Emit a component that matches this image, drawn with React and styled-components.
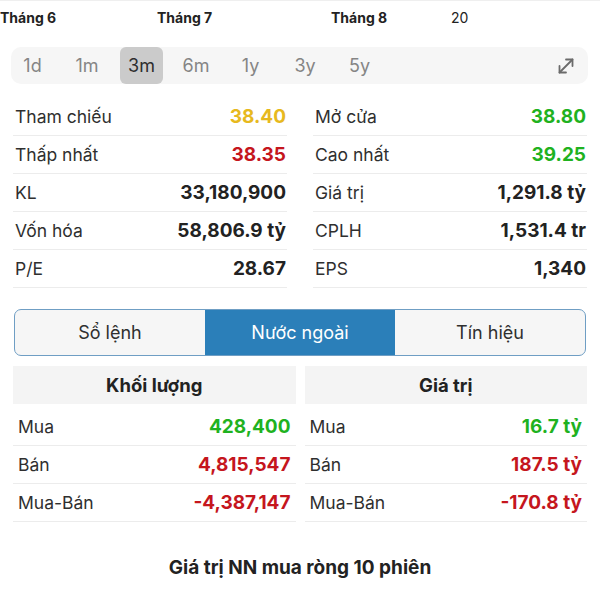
import React from "react";
import styled, { createGlobalStyle } from "styled-components";

const Global = createGlobalStyle`
  html, body { margin: 0; padding: 0; background: #fff; }
  body { font-family: Inter, "Noto Sans", sans-serif; color: #2a2a2a; }
  * { box-sizing: border-box; }
`;

const Page = styled.div`
  width: 600px;
  height: 600px;
  overflow: hidden;
  display: flex;
  flex-direction: column;
  border-top: 1px solid #efefef;
`;

const MonthAxis = styled.div`
  display: flex;
  align-items: center;
  height: 33px;
`;

const MonthLabel = styled.div`
  width: ${(p) => p.$w}px;
  flex: none;
  font-size: 14px;
  font-weight: ${(p) => (p.$light ? 400 : 700)};
  color: #222;
  white-space: nowrap;
`;

const PeriodBar = styled.div`
  margin: 13px 12px 0 11px;
  height: 37px;
  background: #f6f6f6;
  border-radius: 10px;
  display: flex;
  align-items: center;
  gap: 11.5px;
  padding-right: 10px;
`;

const Period = styled.div`
  width: 43px;
  height: 37px;
  flex: none;
  display: flex;
  align-items: center;
  justify-content: center;
  border-radius: 6px;
  font-size: 18px;
  font-weight: 400;
  color: ${(p) => (p.$active ? "#2e2e2e" : "#858585")};
  background: ${(p) => (p.$active ? "#cbcbcb" : "transparent")};
`;

const ExpandBtn = styled.div`
  margin-left: auto;
  width: 24px;
  height: 24px;
  display: flex;
  align-items: center;
  justify-content: center;
  color: #6b6b6b;
`;

const StatsGrid = styled.div`
  margin-top: 14px;
  padding: 0 13px;
  display: grid;
  grid-template-columns: 1fr 1fr;
  column-gap: 26px;
`;

const StatRow = styled.div`
  height: 38px;
  display: flex;
  align-items: center;
  justify-content: space-between;
  border-bottom: 1px solid #ececec;
  padding: 0 1px 0 2px;
`;

const Label = styled.span`
  font-size: 17.5px;
  font-weight: 400;
  color: #2f2f2f;
`;

const Value = styled.span`
  font-size: 19px;
  font-weight: 700;
  color: ${(p) => p.$color || "#222"};
`;

const Segmented = styled.div`
  margin: 21px 14px 0 14px;
  height: 47px;
  display: grid;
  grid-template-columns: 1fr 1fr 1fr;
  border: 1.5px solid #6f9ec4;
  border-radius: 7px;
  overflow: hidden;
  background: #f6f6f6;
`;

const Segment = styled.div`
  display: flex;
  align-items: center;
  justify-content: center;
  font-size: 18px;
  color: ${(p) => (p.$active ? "#fff" : "#2f2f2f")};
  background: ${(p) => (p.$active ? "#2b7fb9" : "transparent")};
`;

const ForeignGrid = styled.div`
  margin-top: 10px;
  padding: 0 13px;
  display: grid;
  grid-template-columns: 1fr 1fr;
  column-gap: 9px;
`;

const Column = styled.div`
  display: flex;
  flex-direction: column;
`;

const HeadCell = styled.div`
  height: 38px;
  margin-bottom: 4px;
  background: #f4f4f4;
  display: flex;
  align-items: center;
  justify-content: center;
  font-size: 18.5px;
  font-weight: 700;
  color: #222;
`;

const ForeignRow = styled(StatRow)`
  padding: 0 5px 0 5px;
`;

const Footer = styled.div`
  margin-top: 34px;
  text-align: center;
  font-size: 19px;
  font-weight: 700;
  color: #222;
`;

const GREEN = "#1fb21f";
const RED = "#c5161d";
const YELLOW = "#e7b91e";

const leftStats = [
  ["Tham chiếu", "38.40", YELLOW],
  ["Thấp nhất", "38.35", RED],
  ["KL", "33,180,900"],
  ["Vốn hóa", "58,806.9 tỷ"],
  ["P/E", "28.67"],
];
const rightStats = [
  ["Mở cửa", "38.80", GREEN],
  ["Cao nhất", "39.25", GREEN],
  ["Giá trị", "1,291.8 tỷ"],
  ["CPLH", "1,531.4 tr"],
  ["EPS", "1,340"],
];

const volume = [
  ["Mua", "428,400", GREEN],
  ["Bán", "4,815,547", RED],
  ["Mua-Bán", "-4,387,147", RED],
];
const value = [
  ["Mua", "16.7 tỷ", GREEN],
  ["Bán", "187.5 tỷ", RED],
  ["Mua-Bán", "-170.8 tỷ", RED],
];

const periods = ["1d", "1m", "3m", "6m", "1y", "3y", "5y"];

function ExpandIcon() {
  return (
    <svg width="20" height="20" viewBox="0 0 20 20" fill="none" stroke="currentColor" strokeWidth="1.8" strokeLinecap="round" strokeLinejoin="round">
      <path d="M3.5 16.5 L16.5 3.5" />
      <path d="M10 3.5 H16.5 V10" />
      <path d="M3.5 10 V16.5 H10" />
    </svg>
  );
}

export default function App() {
  const stats = [];
  for (let i = 0; i < 5; i++) {
    stats.push(
      <StatRow key={"l" + i}>
        <Label>{leftStats[i][0]}</Label>
        <Value $color={leftStats[i][2]}>{leftStats[i][1]}</Value>
      </StatRow>
    );
    stats.push(
      <StatRow key={"r" + i}>
        <Label>{rightStats[i][0]}</Label>
        <Value $color={rightStats[i][2]}>{rightStats[i][1]}</Value>
      </StatRow>
    );
  }
  return (
    <>
      <Global />
      <Page>
        <MonthAxis>
          <MonthLabel $w={157}>Tháng 6</MonthLabel>
          <MonthLabel $w={174}>Tháng 7</MonthLabel>
          <MonthLabel $w={120}>Tháng 8</MonthLabel>
          <MonthLabel $light>20</MonthLabel>
        </MonthAxis>
        <PeriodBar>
          {periods.map((p) => (
            <Period key={p} $active={p === "3m"}>{p}</Period>
          ))}
          <ExpandBtn>
            <ExpandIcon />
          </ExpandBtn>
        </PeriodBar>
        <StatsGrid>{stats}</StatsGrid>
        <Segmented>
          <Segment>Sổ lệnh</Segment>
          <Segment $active>Nước ngoài</Segment>
          <Segment>Tín hiệu</Segment>
        </Segmented>
        <ForeignGrid>
          <Column>
            <HeadCell>Khối lượng</HeadCell>
            {volume.map(([l, v, c]) => (
              <ForeignRow key={l}>
                <Label>{l}</Label>
                <Value $color={c}>{v}</Value>
              </ForeignRow>
            ))}
          </Column>
          <Column>
            <HeadCell>Giá trị</HeadCell>
            {value.map(([l, v, c]) => (
              <ForeignRow key={l}>
                <Label>{l}</Label>
                <Value $color={c}>{v}</Value>
              </ForeignRow>
            ))}
          </Column>
        </ForeignGrid>
        <Footer>Giá trị NN mua ròng 10 phiên</Footer>
      </Page>
    </>
  );
}
